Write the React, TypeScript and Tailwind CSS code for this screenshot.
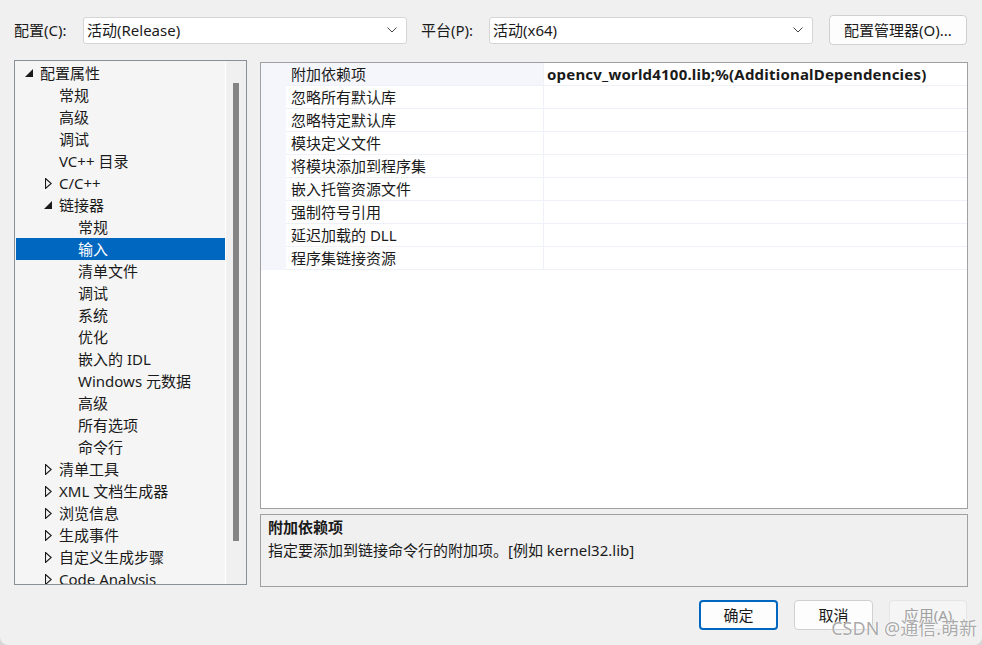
const font = { fontFamily: '"Noto Sans", "Noto Sans CJK SC", sans-serif' }

type TreeItem = { label: string; level: number; arrow?: "open" | "closed"; selected?: boolean }

const treeItems: TreeItem[] = [
  { label: "配置属性", level: 0, arrow: "open" },
  { label: "常规", level: 1 },
  { label: "高级", level: 1 },
  { label: "调试", level: 1 },
  { label: "VC++ 目录", level: 1 },
  { label: "C/C++", level: 1, arrow: "closed" },
  { label: "链接器", level: 1, arrow: "open" },
  { label: "常规", level: 2 },
  { label: "输入", level: 2, selected: true },
  { label: "清单文件", level: 2 },
  { label: "调试", level: 2 },
  { label: "系统", level: 2 },
  { label: "优化", level: 2 },
  { label: "嵌入的 IDL", level: 2 },
  { label: "Windows 元数据", level: 2 },
  { label: "高级", level: 2 },
  { label: "所有选项", level: 2 },
  { label: "命令行", level: 2 },
  { label: "清单工具", level: 1, arrow: "closed" },
  { label: "XML 文档生成器", level: 1, arrow: "closed" },
  { label: "浏览信息", level: 1, arrow: "closed" },
  { label: "生成事件", level: 1, arrow: "closed" },
  { label: "自定义生成步骤", level: 1, arrow: "closed" },
  { label: "Code Analysis", level: 1, arrow: "closed" },
]

const props = [
  { name: "附加依赖项", value: "opencv_world4100.lib;%(AdditionalDependencies)" },
  { name: "忽略所有默认库", value: "" },
  { name: "忽略特定默认库", value: "" },
  { name: "模块定义文件", value: "" },
  { name: "将模块添加到程序集", value: "" },
  { name: "嵌入托管资源文件", value: "" },
  { name: "强制符号引用", value: "" },
  { name: "延迟加载的 DLL", value: "" },
  { name: "程序集链接资源", value: "" },
]

const indent = ["pl-[7px]", "pl-[26px]", "pl-[45px]"]

function Arrow({ kind }: { kind?: "open" | "closed" }) {
  if (kind === "open") {
    return (
      <svg width="8" height="8" viewBox="0 0 8 8" className="ml-[3px]">
        <polygon points="8,0 8,8 0,8" fill="#1a1a1a" />
      </svg>
    )
  }
  if (kind === "closed") {
    return (
      <svg width="7" height="11" viewBox="0 0 7 11" className="ml-[4px]">
        <polygon points="0.5,0.5 6.2,5.5 0.5,10.5" fill="none" stroke="#1a1a1a" strokeWidth="1.1" />
      </svg>
    )
  }
  return null
}

function Dropdown({ text }: { text: string }) {
  return (
    <div className="flex h-[27px] w-[324px] items-center justify-between rounded-[3px] border border-[#d5d5d5] bg-white pl-[3px] pr-[9px]">
      <span>{text}</span>
      <svg width="10" height="6" viewBox="0 0 10 6">
        <polyline points="0.5,0.5 5,5 9.5,0.5" fill="none" stroke="#444" strokeWidth="1" />
      </svg>
    </div>
  )
}

export default function App() {
  return (
    <div className="relative h-[645px] w-[982px] overflow-hidden bg-[#d6d6d6]" style={font}>
      <div className="flex h-full w-full flex-col rounded-b-[8px] bg-[#f0f0f0] text-[15px] leading-[20px] text-[#1a1a1a]">
        {/* top bar */}
        <div className="mt-[15px] flex h-[30px] items-center pl-[14px]">
          <span className="w-[69px]">配置(C):</span>
          <Dropdown text="活动(Release)" />
          <span className="ml-[14px] w-[68px]">平台(P):</span>
          <Dropdown text="活动(x64)" />
          <button className="ml-[16px] h-[30px] w-[138px] rounded-[4px] border border-[#d0d0d0] bg-[#fdfdfd]">
            配置管理器(O)...
          </button>
        </div>

        <div className="mt-[15px] flex pl-[14px]">
          {/* tree */}
          <div className="flex h-[525px] w-[233px] border border-[#8a9099] bg-[#f5f5f5]">
            <div className="w-[210px] overflow-hidden pt-[1px]">
              {treeItems.map((t, i) => (
                <div
                  key={i}
                  className={`flex h-[22px] items-center ${indent[t.level]} ${
                    t.selected ? "ml-[1px] bg-[#0067c0] text-white" : ""
                  }`}
                >
                  <div className={`flex w-[18px] shrink-0 items-center ${t.selected ? "-ml-[1px]" : ""}`}>
                    <Arrow kind={t.arrow} />
                  </div>
                  <span className="whitespace-nowrap">{t.label}</span>
                </div>
              ))}
            </div>
            <div className="w-[1px] bg-white" />
            <div className="flex w-[20px] justify-center bg-[#f0f0f0] pt-[22px]">
              <div className="h-[458px] w-[6px] bg-[#858585]" />
            </div>
          </div>

          {/* right side */}
          <div className="ml-[13px] mt-[2px] flex w-[708px] flex-col">
            <div className="h-[447px] border border-[#a0a0a0] bg-white">
              {props.map((p, i) => (
                <div key={i} className="flex h-[23px]">
                  <div className="w-[25px] bg-[#f4f6fb]" />
                  <div
                    className={`flex w-[258px] items-center border-b border-r border-[#eef1f7] pl-[5px] ${
                      i === 0 ? "bg-[#f4f6fb]" : ""
                    }`}
                  >
                    {p.name}
                  </div>
                  <div className="flex flex-1 items-center border-b border-[#eef1f7] pl-[3px] font-bold tracking-[0.2px]">
                    {p.value}
                  </div>
                </div>
              ))}
            </div>
            <div className="mt-[5px] h-[73px] border border-[#a0a0a0] bg-[#f0f0f0] px-[7px] pt-[1px]">
              <div className="h-[22px] font-bold leading-[22px]">附加依赖项</div>
              <div className="h-[24px] leading-[24px]">指定要添加到链接命令行的附加项。[例如 kernel32.lib]</div>
            </div>
          </div>
        </div>

        {/* buttons */}
        <div className="mt-[13px] flex justify-end gap-[16px] pr-[15px]">
          <button className="h-[30px] w-[79px] rounded-[4px] border-2 border-[#0067c0] bg-[#fdfdfd]">确定</button>
          <button className="h-[30px] w-[79px] rounded-[4px] border border-[#d0d0d0] bg-[#fdfdfd]">取消</button>
          <button className="h-[30px] w-[78px] rounded-[4px] border border-[#e5e5e5] bg-[#f5f5f5] text-[#a0a0a0]">
            应用(A)
          </button>
        </div>
      </div>

      <div
        className="absolute bottom-[7px] right-[5px] text-[18px] leading-[20px] text-[#a0a0a0]/90"
        style={{ textShadow: "0 0 2px #fff, 0 0 1px #fff" }}
      >
        CSDN @通信.萌新
      </div>
    </div>
  )
}
